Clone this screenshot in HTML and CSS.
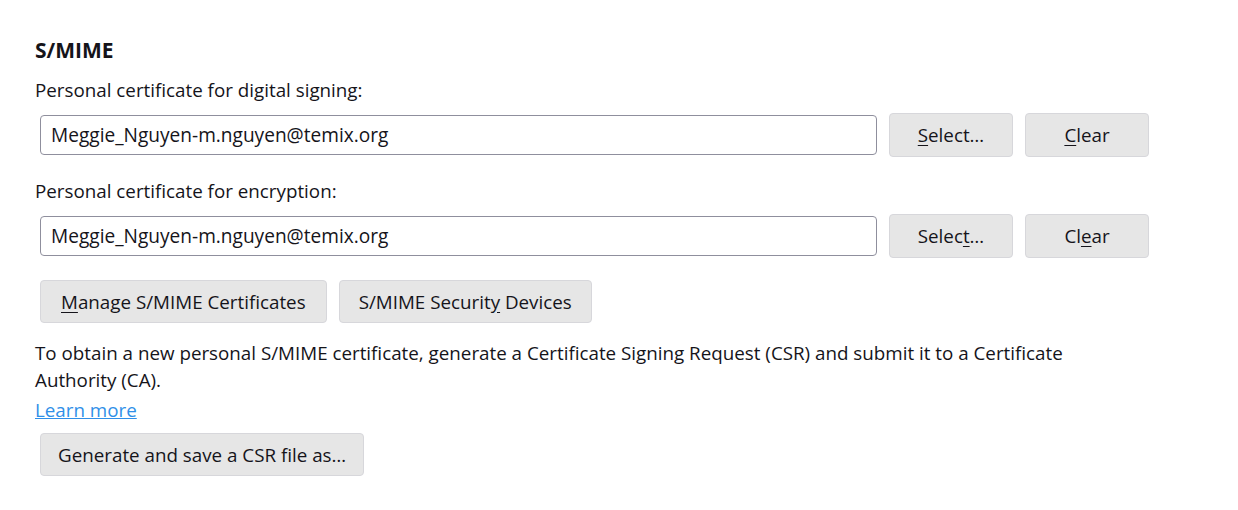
FILE: index.html
```html
<!DOCTYPE html>
<html lang="en">
<head>
<meta charset="utf-8">
<title>S/MIME</title>
<link rel="stylesheet" href="styles.css">
</head>
<body>
<div class="pane">
  <h2 class="title">S/MIME</h2>
  <div class="label">Personal certificate for digital signing:</div>
  <div class="row">
    <input class="field" type="text" value="Meggie_Nguyen-m.nguyen@temix.org" readonly>
    <button class="btn btn-small"><u>S</u>elect…</button>
    <button class="btn btn-small"><u>C</u>lear</button>
  </div>
  <div class="label label-gap">Personal certificate for encryption:</div>
  <div class="row">
    <input class="field" type="text" value="Meggie_Nguyen-m.nguyen@temix.org" readonly>
    <button class="btn btn-small">Selec<u>t</u>…</button>
    <button class="btn btn-small">Cl<u>e</u>ar</button>
  </div>
  <div class="row row-actions">
    <button class="btn btn-manage"><u>M</u>anage S/MIME Certificates</button>
    <button class="btn">S/MIME Securit<u>y</u> Devices</button>
  </div>
  <p class="desc">To obtain a new personal S/MIME certificate, generate a Certificate Signing Request (CSR) and submit it to a Certificate Authority (CA).</p>
  <a class="link" href="#">Learn more</a>
  <div class="row row-generate">
    <button class="btn btn-generate">Generate and save a CSR file as…</button>
  </div>
</div>
</body>
</html>
```
FILE: styles.css
```css
html, body {
  margin: 0;
  padding: 0;
  background: #ffffff;
}

body {
  font-family: "Open Sans", "Noto Sans", sans-serif;
  font-size: 18.8px;
  color: #15141a;
}

.pane {
  padding: 34px 0 0 35px;
}

.title {
  margin: 0;
  font-size: 21px;
  font-weight: 700;
  line-height: 32px;
}

.label {
  line-height: 28px;
  margin-top: 10px;
}

.label-gap {
  margin-top: 20px;
}

.row {
  display: flex;
  align-items: center;
  gap: 12px;
  margin-left: 5px;
  margin-top: 9px;
}

.field {
  box-sizing: border-box;
  flex: 0 0 837px;
  width: 837px;
  height: 40px;
  padding: 0 10px;
  border: 1px solid #8f8f9d;
  border-radius: 4px;
  font-family: inherit;
  font-size: 19.1px;
  color: #15141a;
  background: #ffffff;
  outline: none;
}

.btn {
  box-sizing: border-box;
  flex: 0 0 auto;
  height: 44px;
  padding: 0 19px;
  border: 1px solid #d7d7db;
  border-radius: 4px;
  background: #e6e6e6;
  font-family: inherit;
  font-size: 18.8px;
  color: #15141a;
  white-space: nowrap;
}

.btn-small {
  width: 124px;
  padding: 0;
}

.btn-manage {
  padding: 0 20px;
}

.btn-generate {
  padding: 0 17px;
}

.btn u {
  text-underline-offset: 3px;
}

.row-actions {
  margin-top: 22px;
}

.row-actions .btn {
  height: 43px;
}

.desc {
  margin: 17px 0 0;
  line-height: 27px;
  width: 1060px;
}

.link {
  display: inline-block;
  margin-top: 3px;
  line-height: 27px;
  color: #2f8fe8;
  text-decoration: underline;
}

.row-generate {
  margin-top: 9px;
}

.row-generate .btn {
  height: 43px;
}
```
